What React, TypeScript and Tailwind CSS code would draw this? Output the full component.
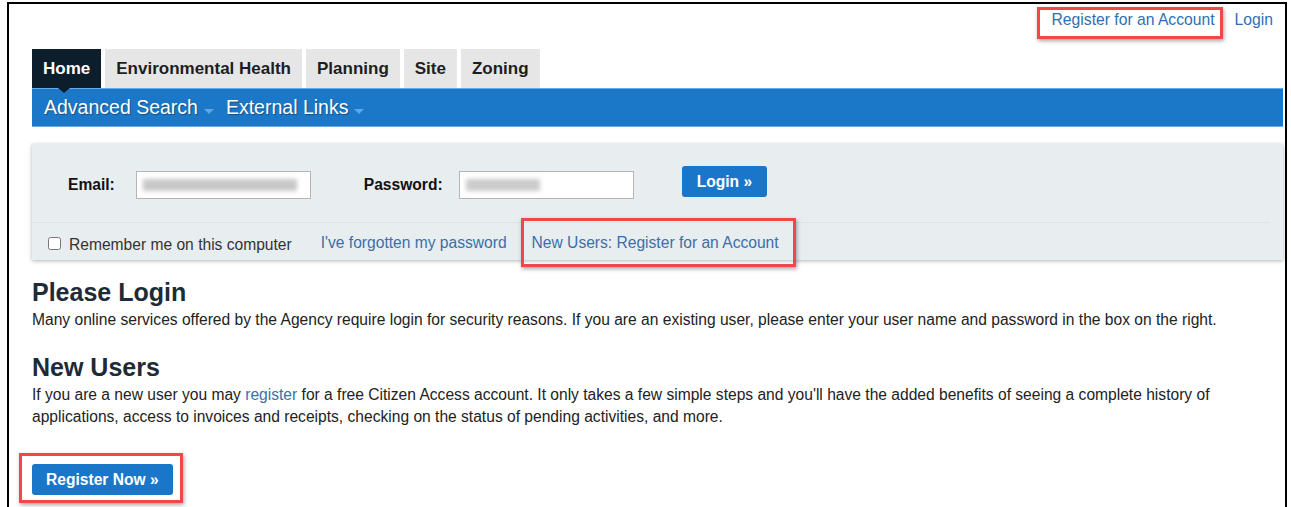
import React from 'react';

const tabs = ['Home', 'Environmental Health', 'Planning', 'Site', 'Zoning'];

// red callout drawn around an element
function Callout({ className }: { className: string }) {
  return (
    <span
      className={`pointer-events-none absolute border-[3px] border-[#f0474b] shadow-[1px_2px_4px_rgba(0,0,0,0.35)] ${className}`}
    />
  );
}

function Caret() {
  return (
    <span className="ml-[6px] mt-[8px] inline-block h-0 w-0 border-x-[5px] border-t-[5px] border-x-transparent border-t-[#5aa8ea]" />
  );
}

function App() {
  return (
    <div className="h-[507px] w-[1291px] overflow-hidden bg-white pt-[2px] font-['Liberation_Sans',Arial,sans-serif] text-[#222]">
      <div className="ml-[7px] h-[520px] w-[1280px] border-x-2 border-t-2 border-black pl-[23px] pr-[2px]">
        {/* account links */}
        <div className="flex h-[45px] items-start justify-end pr-[10px] pt-[7px] text-[15.7px] leading-[18px] text-[#2f6fb1]">
          <a className="relative">
            Register for an Account
            <Callout className="-left-[15px] -right-[8px] -top-[4px] -bottom-[10px]" />
          </a>
          <a className="ml-[20px]">Login</a>
        </div>

        {/* module tabs */}
        <div className="flex gap-[4px]">
          {tabs.map((t, i) => (
            <div
              key={t}
              className={`relative flex h-[39px] items-center px-[11px] text-[17px] font-bold ${
                i === 0 ? 'bg-[#0c1e2c] text-white' : 'bg-[#e6e6e6] text-[#1e1e1e]'
              }`}
            >
              {t}
              {i === 0 && (
                <span className="absolute left-[26px] top-[39px] z-10 h-0 w-0 border-x-[6px] border-t-[5px] border-x-transparent border-t-[#0c1e2c]" />
              )}
            </div>
          ))}
        </div>

        {/* sub menu bar */}
        <div className="flex h-[39px] items-center gap-[12px] border-y border-[#6aaae6] bg-[#1b78c9] pl-[12px] text-[19.5px] text-white [text-shadow:1px_1px_1px_rgba(0,0,0,0.35)]">
          <span className="flex items-center">
            Advanced Search
            <Caret />
          </span>
          <span className="flex items-center">
            External Links
            <Caret />
          </span>
        </div>

        {/* login panel */}
        <div className="mt-[17px] bg-[#e8edf0] text-[15.6px] shadow-[0_1px_4px_rgba(0,0,0,0.3)]">
          <div className="flex h-[78px] items-center pl-[36px] pt-[3px]">
            <label className="font-bold text-[#111]">Email:</label>
            <div className="ml-[21px] flex h-[28px] w-[175px] items-center border border-[#b5b5b5] bg-white px-[6px]">
              <div className="h-[12px] w-[154px] bg-[#c8c8c8] blur-[2px]" />
            </div>
            <label className="ml-[53px] font-bold text-[#111]">Password:</label>
            <div className="ml-[16px] flex h-[28px] w-[175px] items-center border border-[#b5b5b5] bg-white px-[6px]">
              <div className="h-[12px] w-[74px] bg-[#cccccc] blur-[2px]" />
            </div>
            <button className="mb-[6px] ml-[48px] h-[31px] rounded-[3px] bg-[#1a76c8] px-[15px] text-[15.6px] font-bold text-white">
              Login »
            </button>
          </div>
          <div className="mr-[13px] border-t border-[#dde2e5]" />
          <div className="flex h-[37px] items-center pl-[16px] pt-[3px] text-[#333]">
            <input type="checkbox" className="h-[13px] w-[13px] accent-white" />
            <span className="ml-[8px] mt-[3px]">Remember me on this computer</span>
            <a className="ml-[29px] text-[#3a70a8]">I've forgotten my password</a>
            <a className="relative ml-[25px] text-[#3a70a8]">
              New Users: Register for an Account
              <Callout className="-left-[11px] -right-[17px] -top-[13px] -bottom-[12px]" />
            </a>
          </div>
        </div>

        {/* intro text */}
        <h2 className="mt-[18px] text-[25px] font-bold leading-[28px] text-[#1e2a36]">Please Login</h2>
        <p className="mt-[3px] text-[15.6px] leading-[22px]">
          Many online services offered by the Agency require login for security reasons. If you are an existing user,
          please enter your user name and password in the box on the right.
        </p>

        <h2 className="mt-[22px] text-[25px] font-bold leading-[28px] text-[#1e2a36]">New Users</h2>
        <p className="mt-[3px] w-[1200px] text-[15.6px] leading-[22px]">
          If you are a new user you may <a className="text-[#3a70a8]">register</a> for a free Citizen Access account.
          It only takes a few simple steps and you'll have the added benefits of seeing a complete history of
          applications, access to invoices and receipts, checking on the status of pending activities, and more.
        </p>

        <div className="mt-[36px]">
          <button className="relative h-[31px] rounded-[3px] bg-[#1a76c8] px-[14px] text-[15.6px] font-bold text-white">
            Register Now »
            <Callout className="-left-[13px] -right-[10px] -top-[11px] -bottom-[8px]" />
          </button>
        </div>
      </div>
    </div>
  );
}

export default App;
